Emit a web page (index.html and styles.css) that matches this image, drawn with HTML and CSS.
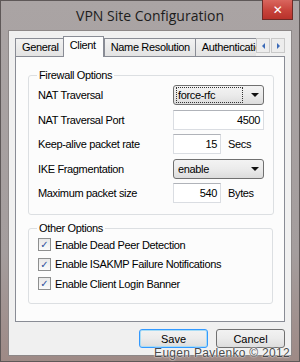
FILE: index.html
```html
<!DOCTYPE html>
<html lang="en">
<head>
    <meta charset="UTF-8">
    <title>VPN Site Configuration</title>
    <link rel="stylesheet" href="styles.css">
</head>
<body>
    <div class="window">
        <div class="titlebar">
            <span class="title">VPN Site Configuration</span>
            <span class="close">&#x2715;</span>
        </div>
        <div class="client">
            <div class="tabs">
                <span class="tab">General</span>
                <span class="tab active">Client</span>
                <span class="tab">Name Resolution</span>
                <span class="tab clipped">Authentication</span>
                <span class="scroll">
                    <span class="arrow left"></span>
                    <span class="arrow right"></span>
                </span>
            </div>
            <div class="panel">
                <fieldset class="group">
                    <legend>Firewall Options</legend>
                    <div class="row">
                        <label>NAT Traversal</label>
                        <span class="select focused"><span class="value">force-rfc</span><span class="drop"></span></span>
                    </div>
                    <div class="row">
                        <label>NAT Traversal Port</label>
                        <span class="input wide">4500</span>
                    </div>
                    <div class="row">
                        <label>Keep-alive packet rate</label>
                        <span class="input short">15</span>
                        <span class="unit">Secs</span>
                    </div>
                    <div class="row">
                        <label>IKE Fragmentation</label>
                        <span class="select"><span class="value">enable</span><span class="drop"></span></span>
                    </div>
                    <div class="row">
                        <label>Maximum packet size</label>
                        <span class="input short">540</span>
                        <span class="unit">Bytes</span>
                    </div>
                </fieldset>
                <fieldset class="group other">
                    <legend>Other Options</legend>
                    <div class="check"><span class="box">&#10003;</span>Enable Dead Peer Detection</div>
                    <div class="check"><span class="box">&#10003;</span>Enable ISAKMP Failure Notifications</div>
                    <div class="check"><span class="box">&#10003;</span>Enable Client Login Banner</div>
                </fieldset>
            </div>
            <div class="buttons">
                <button class="default">Save</button>
                <button>Cancel</button>
            </div>
        </div>
        <div class="credit">Eugen Pavlenko &copy; 2012</div>
    </div>
</body>
</html>
```

FILE: styles.css
```css
body {
    margin: 0;
    font-family: "Liberation Sans", Arial, sans-serif;
    font-size: 11px;
    letter-spacing: -0.35px;
    color: #000;
}

.window {
    position: relative;
    width: 300px;
    height: 362px;
    box-sizing: border-box;
    border: 1px solid #5e5858;
    background: linear-gradient(180deg, #aaa4a4 0%, #a49d9d 70%, #9e8a86 100%);
}

.titlebar {
    height: 29px;
    display: flex;
    align-items: center;
    justify-content: center;
}

.title {
    font-family: "Open Sans", sans-serif;
    font-size: 14px;
    letter-spacing: 0;
    color: #1c1c1c;
}

.close {
    position: absolute;
    top: -1px;
    right: 6px;
    width: 31px;
    height: 20px;
    box-sizing: border-box;
    border: 1px solid #6f2a26;
    border-top: none;
    background: linear-gradient(180deg, #d9665e 0%, #c7433b 55%, #b8322b 100%);
    color: #fff;
    font-family: "DejaVu Sans", sans-serif;
    font-weight: bold;
    font-size: 12px;
    display: flex;
    align-items: center;
    justify-content: center;
}

.client {
    margin: 0 7px;
    height: 326px;
    box-sizing: border-box;
    border: 1px solid #8d8888;
    background: #f0f0f0;
    padding: 5px 6px 0 6px;
}

.tabs {
    display: flex;
    align-items: flex-end;
    height: 20px;
    position: relative;
    z-index: 1;
}

.tab {
    height: 18px;
    box-sizing: border-box;
    border: 1px solid #898c95;
    border-bottom: none;
    background: linear-gradient(180deg, #f2f2f2 0%, #e3e3e3 100%);
    padding: 2px 5px 0 6px;
    margin-right: -1px;
    white-space: nowrap;
}

.tab.active {
    height: 21px;
    background: #fcfcfc;
    padding: 2px 7px 0 6px;
    margin: 0 0 -1px -1px;
    position: relative;
    z-index: 2;
}

.tab.clipped {
    flex: 1;
    overflow: hidden;
    border-right: none;
}

.scroll {
    display: flex;
    height: 18px;
    align-items: flex-start;
    margin-left: 1px;
    gap: 1px;
}

.arrow {
    width: 14px;
    height: 15px;
    box-sizing: border-box;
    border: 1px solid #c9c9c9;
    background: #ededed;
    display: flex;
    align-items: center;
    justify-content: center;
}

.arrow::before {
    content: "";
    border-top: 3px solid transparent;
    border-bottom: 3px solid transparent;
}

.arrow.left::before {
    border-right: 3px solid #3c6bb8;
}

.arrow.right::before {
    border-left: 3px solid #3c6bb8;
}

.panel {
    height: 266px;
    box-sizing: border-box;
    border: 1px solid #898c95;
    background: #fcfcfc;
    padding: 12px 11px 0 12px;
}

.group {
    margin: 0;
    border: 1px solid #dcdfe2;
    border-radius: 3px;
    padding: 4px 9px 11px 9px;
}

.group legend {
    padding: 0 2px;
    margin-left: -1px;
}

.row {
    display: flex;
    align-items: center;
    height: 20px;
    margin-bottom: 4.5px;
}

.row:last-child {
    margin-bottom: 0;
}

.row label {
    width: 135px;
}

.select {
    width: 91px;
    height: 20px;
    box-sizing: border-box;
    border: 1px solid #707070;
    border-radius: 3px;
    background: linear-gradient(180deg, #f3f3f3 0%, #ebebeb 50%, #dcdcdc 100%);
    display: flex;
    align-items: center;
    padding: 0 3px;
}

.select .value {
    flex: 1;
    padding-left: 1px;
}

.select.focused .value {
    outline: 1px dotted #333;
    margin-right: 8px;
    line-height: 14px;
}

.drop {
    width: 10px;
    display: flex;
    justify-content: center;
}

.drop::before {
    content: "";
    border-left: 4px solid transparent;
    border-right: 4px solid transparent;
    border-top: 4px solid #111;
}

.input {
    height: 20px;
    box-sizing: border-box;
    border: 1px solid #dadde2;
    border-top-color: #b0b3b9;
    background: #fff;
    text-align: right;
    padding: 3px 3px 0 0;
}

.input.wide {
    width: 91px;
}

.input.short {
    width: 48px;
}

.unit {
    margin-left: 7px;
}

.group.other {
    margin-top: 7px;
    padding: 1px 9px 9px 9px;
}

.check {
    display: flex;
    align-items: center;
    height: 19.5px;
}

.box {
    width: 13px;
    height: 13px;
    box-sizing: border-box;
    border: 1px solid #8e8f8f;
    background: linear-gradient(180deg, #e8e8e8 0%, #fafafa 100%);
    color: #2a4f9c;
    font-family: "DejaVu Sans", sans-serif;
    font-size: 10px;
    font-weight: bold;
    line-height: 11px;
    text-align: center;
    letter-spacing: 0;
    margin-right: 4px;
}

.buttons {
    display: flex;
    justify-content: flex-end;
    gap: 8px;
    padding: 7px 0 0 0;
}

button {
    width: 69px;
    height: 19px;
    border: 1px solid #707070;
    border-radius: 3px;
    background: linear-gradient(180deg, #f2f2f2 0%, #ebebeb 50%, #dddddd 100%);
    font-family: "Liberation Sans", Arial, sans-serif;
    font-size: 11px;
    padding: 0;
}

button.default {
    border-color: #3399ff;
    box-shadow: inset 0 0 0 1px #a8dcf5;
}

.credit {
    position: absolute;
    right: 9px;
    bottom: 1px;
    font-size: 12px;
    color: #4a4a4a;
    text-shadow: 0 0 2px #fff, 0 0 1px #fff;
    letter-spacing: 0.3px;
}
```
